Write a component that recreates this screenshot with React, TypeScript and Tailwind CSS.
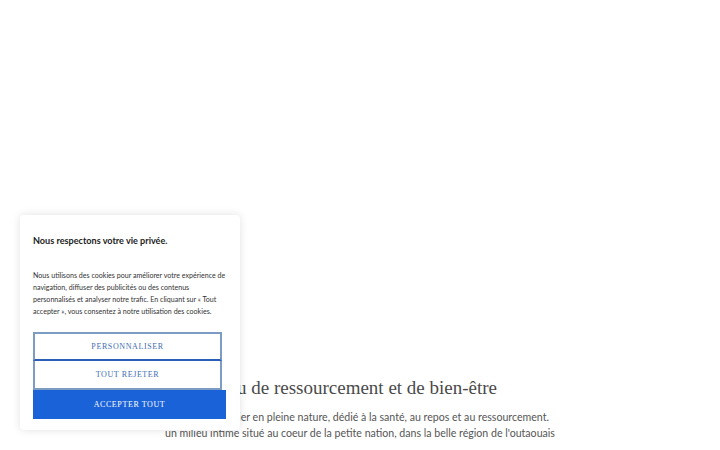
import React from "react";

export default function App() {
  return (
    <div className="relative w-[720px] h-[450px] bg-white overflow-hidden">
      <div className="flex flex-col items-center pt-[376px]">
        <h2
          className="text-[19px] leading-[24px] text-[#4a4a4a] pr-[53px]"
          style={{ fontFamily: '"Liberation Serif", "DejaVu Serif", serif' }}
        >
          Un milieu de ressourcement et de bien-être
        </h2>
        <div
          className="mt-[9px] text-center text-[10.6px] leading-[16px] text-[#555]"
          style={{ fontFamily: 'Lato, "Noto Sans", sans-serif' }}
        >
          <p>Un refuge-atelier en pleine nature, dédié à la santé, au repos et au ressourcement.</p>
          <p>un milieu intime situé au coeur de la petite nation, dans la belle région de l'outaouais</p>
        </div>
      </div>

      <div
        className="absolute left-[20px] top-[215px] w-[220px] h-[215px] bg-white rounded-[4px] shadow-[0_0_8px_rgba(0,0,0,0.12)] pl-[13px] pt-[19px]"
        style={{ fontFamily: 'Lato, "Noto Sans", sans-serif' }}
      >
        <div className="text-[9.1px] leading-[14px] font-bold text-[#222]">Nous respectons votre vie privée.</div>
        <p className="mt-[22px] text-[7.1px] leading-[12px] text-[#333] w-[200px]">
          Nous utilisons des cookies pour améliorer votre expérience de navigation, diffuser des publicités ou des contenus personnalisés et analyser notre trafic. En cliquant sur « Tout accepter », vous consentez à notre utilisation des cookies.
        </p>
        <div
          className="mt-[14px] flex flex-col"
          style={{ fontFamily: '"Liberation Serif", "DejaVu Serif", serif' }}
        >
          <button className="w-[189px] h-[29px] border-2 border-[#7d9cc4] border-b-[#2a5fb8] bg-white text-[#3f6db5] text-[8px] tracking-[0.6px]">
            PERSONNALISER
          </button>
          <button className="w-[189px] h-[29px] border-2 border-t-0 border-[#7d9cc4] bg-white text-[#3f6db5] text-[8px] tracking-[0.6px]">
            TOUT REJETER
          </button>
          <button className="w-[193px] h-[29px] bg-[#1a62d8] text-white text-[8px] tracking-[0.6px]">
            ACCEPTER TOUT
          </button>
        </div>
      </div>
    </div>
  );
}
